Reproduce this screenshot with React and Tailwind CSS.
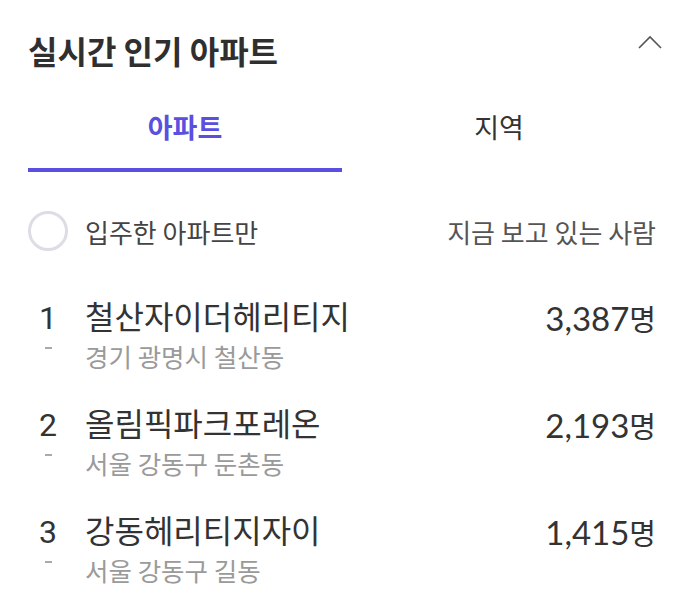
import { useState } from 'react'

// Live "popular apartments" panel: tabs, filter toggle, ranked list.
const ITEMS = [
  { rank: 1, name: '철산자이더헤리티지', area: '경기 광명시 철산동', viewers: '3,387' },
  { rank: 2, name: '올림픽파크포레온', area: '서울 강동구 둔촌동', viewers: '2,193' },
  { rank: 3, name: '강동헤리티지자이', area: '서울 강동구 길동', viewers: '1,415' },
]

const TABS = ['아파트', '지역']

export default function App() {
  const [tab, setTab] = useState(0)

  return (
    <div className="w-[676px] h-[590px] bg-white pl-[28px] pr-[20px] pt-[30px] font-['Noto_Sans_CJK_KR',sans-serif] text-[#333] overflow-hidden">
      {/* Header */}
      <div className="flex items-start justify-between h-[40px]">
        <h2 className="text-[32px] leading-[40px] font-bold text-[#2f2f2f]">실시간 인기 아파트</h2>
        <button className="mt-[5px] -mr-[6px]">
          <svg width="24" height="14" viewBox="0 0 24 14" fill="none">
            <polyline points="1,13 12,2 23,13" stroke="#555" strokeWidth="1.6" />
          </svg>
        </button>
      </div>

      {/* Tabs */}
      <div className="flex mt-[16px]">
        {TABS.map((t, i) => (
          <button key={t} onClick={() => setTab(i)}
            className={`flex-1 h-[86px] flex items-center justify-center text-[27px] border-b-4 ${
              tab === i
                ? 'border-[#5a4fdf] text-[#5a4fdf] font-semibold'
                : 'border-transparent text-[#333]'
            }`}>
            {t}
          </button>
        ))}
      </div>

      {/* Filter row */}
      <div className="flex items-center justify-between h-[40px] mt-[39px]">
        <label className="flex items-center gap-[17px]">
          <span className="w-[40px] h-[40px] rounded-full border-[3px] border-[#dedde6]" />
          <span className="text-[26px] text-[#444]">입주한 아파트만</span>
        </label>
        <span className="text-[26px] text-[#555]">지금 보고 있는 사람</span>
      </div>

      {/* Ranking */}
      <ul className="mt-[44px] flex flex-col gap-[30px]">
        {ITEMS.map(item => (
          <li key={item.rank} className="flex items-start">
            <div className="w-[40px] flex flex-col items-center pt-[7px]">
              <span className="font-['Roboto',sans-serif] text-[32px] leading-[32px] text-[#333]">{item.rank}</span>
              <span className="mt-[13px] w-[7px] h-[1.5px] bg-[#aaa]" />
            </div>
            <div className="flex-1 ml-[17px]">
              <div className="text-[32px] leading-[40px] text-[#333]">{item.name}</div>
              <div className="mt-[5px] text-[25.5px] leading-[32px] text-[#9a9a9a]">{item.area}</div>
            </div>
            <div className="pt-[3px] leading-[40px] text-[#333]">
              <span className="font-['Lato',sans-serif] text-[33px]">{item.viewers}</span>
              <span className="text-[29px]">명</span>
            </div>
          </li>
        ))}
      </ul>
    </div>
  )
}
